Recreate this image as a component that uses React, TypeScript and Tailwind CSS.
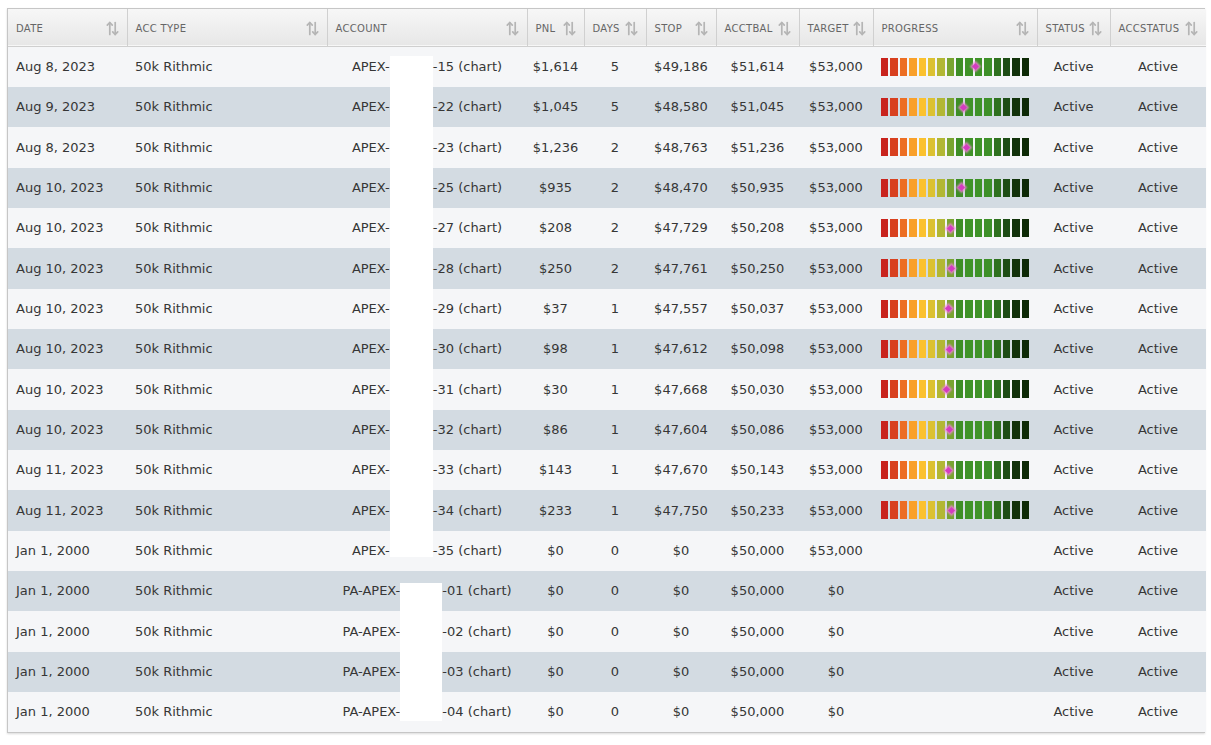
import React from "react";

type Row = {
  date: string;
  pre: string;
  suf: string;
  pnl: string;
  days: string;
  stop: string;
  bal: string;
  target: string;
  progress: number | null;
};

const raw: [string, string, string, string, string, string, string, string, number | null][] = [
  ["Aug 8, 2023", "APEX-", "-15 (chart)", "$1,614", "5", "$49,186", "$51,614", "$53,000", 0.637],
  ["Aug 9, 2023", "APEX-", "-22 (chart)", "$1,045", "5", "$48,580", "$51,045", "$53,000", 0.558],
  ["Aug 8, 2023", "APEX-", "-23 (chart)", "$1,236", "2", "$48,763", "$51,236", "$53,000", 0.579],
  ["Aug 10, 2023", "APEX-", "-25 (chart)", "$935", "2", "$48,470", "$50,935", "$53,000", 0.544],
  ["Aug 10, 2023", "APEX-", "-27 (chart)", "$208", "2", "$47,729", "$50,208", "$53,000", 0.47],
  ["Aug 10, 2023", "APEX-", "-28 (chart)", "$250", "2", "$47,761", "$50,250", "$53,000", 0.475],
  ["Aug 10, 2023", "APEX-", "-29 (chart)", "$37", "1", "$47,557", "$50,037", "$53,000", 0.456],
  ["Aug 10, 2023", "APEX-", "-30 (chart)", "$98", "1", "$47,612", "$50,098", "$53,000", 0.461],
  ["Aug 10, 2023", "APEX-", "-31 (chart)", "$30", "1", "$47,668", "$50,030", "$53,000", 0.443],
  ["Aug 10, 2023", "APEX-", "-32 (chart)", "$86", "1", "$47,604", "$50,086", "$53,000", 0.46],
  ["Aug 11, 2023", "APEX-", "-33 (chart)", "$143", "1", "$47,670", "$50,143", "$53,000", 0.458],
  ["Aug 11, 2023", "APEX-", "-34 (chart)", "$233", "1", "$47,750", "$50,233", "$53,000", 0.473],
  ["Jan 1, 2000", "APEX-", "-35 (chart)", "$0", "0", "$0", "$50,000", "$53,000", null],
  ["Jan 1, 2000", "PA-APEX-", "-01 (chart)", "$0", "0", "$0", "$50,000", "$0", null],
  ["Jan 1, 2000", "PA-APEX-", "-02 (chart)", "$0", "0", "$0", "$50,000", "$0", null],
  ["Jan 1, 2000", "PA-APEX-", "-03 (chart)", "$0", "0", "$0", "$50,000", "$0", null],
  ["Jan 1, 2000", "PA-APEX-", "-04 (chart)", "$0", "0", "$0", "$50,000", "$0", null],
];

const rows: Row[] = raw.map((r) => ({
  date: r[0],
  pre: r[1],
  suf: r[2],
  pnl: r[3],
  days: r[4],
  stop: r[5],
  bal: r[6],
  target: r[7],
  progress: r[8],
}));

// class for the white redaction block per row
const maskClass = (i: number) => {
  if (i === 0) return "self-end h-[31.35px] w-[43px]";
  if (i === 12) return "self-start h-[26px] w-[43px]";
  if (i === 13) return "self-end h-[28px] w-[42px]";
  if (i === 16) return "self-start h-[28.5px] w-[42px]";
  if (i >= 13) return "self-stretch w-[42px]";
  return "self-stretch w-[43px]";
};

const segColors = [
  "bg-[#c8231d]",
  "bg-[#d8401f]",
  "bg-[#ec6e23]",
  "bg-[#f9a02a]",
  "bg-[#fbc12e]",
  "bg-[#dcc131]",
  "bg-[#b2b734]",
  "bg-[#78a430]",
  "bg-[#3e8e26]",
  "bg-[#3f9328]",
  "bg-[#3f9328]",
  "bg-[#3e9029]",
  "bg-[#2f711f]",
  "bg-[#1e4d16]",
  "bg-[#12320b]",
  "bg-[#0d2a06]",
];

function SortIcon() {
  return (
    <svg width="13" height="15" viewBox="0 0 13 15" className="shrink-0">
      <g stroke="#b5b5b5" strokeWidth="1.7" fill="none" strokeLinecap="round" strokeLinejoin="round">
        <path d="M3.8 13.5 V1.5" />
        <path d="M1.3 4.2 L3.8 1.5 L6.3 4.2" />
        <path d="M9.2 1.5 V13.5" />
        <path d="M6.7 10.8 L9.2 13.5 L11.7 10.8" />
      </g>
    </svg>
  );
}

function Progress({ value }: { value: number }) {
  return (
    <div className="relative w-[148px] h-[18px] flex gap-[2px]">
      {segColors.map((c, i) => (
        <div key={i} className={`flex-1 ${c}`} />
      ))}
      <div
        className="absolute top-1/2 w-[5px] h-[5px] bg-[#d43cc0] rotate-45 shadow-[0_0_2px_1.5px_rgba(236,130,214,0.85)]"
        style={{ left: `${value * 148 - 2.5}px`, marginTop: "-2.5px" }}
      />
    </div>
  );
}

const headers: { label: string; w: string }[] = [
  { label: "Date", w: "w-[119px]" },
  { label: "Acc Type", w: "w-[200px]" },
  { label: "Account", w: "w-[200px]" },
  { label: "PNL", w: "w-[57px]" },
  { label: "Days", w: "w-[62px]" },
  { label: "Stop", w: "w-[70px]" },
  { label: "AcctBal", w: "w-[83px]" },
  { label: "Target", w: "w-[74px]" },
  { label: "Progress", w: "w-[164px]" },
  { label: "Status", w: "w-[73px]" },
  { label: "AccStatus", w: "w-[96px]" },
];

export default function App() {
  return (
    <div
      className="bg-white w-[1211px] h-[745px] pt-[8px] pl-[7px]"
      style={{ fontFamily: "'DejaVu Sans', sans-serif" }}
    >
      <div className="w-[1198px] border border-[#c6c6c6] shadow-[0_1px_2px_rgba(0,0,0,0.15)]">
        <table className="w-full border-collapse table-fixed">
          <colgroup>
            {headers.map((h, i) => (
              <col key={i} className={h.w} />
            ))}
          </colgroup>
          <thead>
            <tr className="h-[37px] bg-gradient-to-b from-[#f7f7f7] to-[#e7e7e7] border-b border-[#cfcfcf]">
              {headers.map((h, i) => (
                <th
                  key={i}
                  className="px-2 font-normal text-left border-r border-[#d0d0d0] last:border-r-0"
                >
                  <div className="flex items-center justify-between gap-1 pt-[2px]">
                    <span className="uppercase text-[10px] tracking-[0.3px] text-[#666666]">{h.label}</span>
                    <SortIcon />
                  </div>
                </th>
              ))}
            </tr>
          </thead>
          <tbody className="text-[13px] text-[#363636]">
            {rows.map((r, i) => (
              <tr key={i} className={`h-[40.35px] ${i % 2 === 0 ? "bg-[#f5f6f8]" : "bg-[#d3dbe2]"}`}>
                <td className="px-2 whitespace-nowrap">{r.date}</td>
                <td className="px-2 whitespace-nowrap">50k Rithmic</td>
                <td className="p-0">
                  <div className="h-[40.35px] flex justify-center whitespace-nowrap">
                    <span className="self-center">{r.pre}</span>
                    <span className={`bg-white shrink-0 ${maskClass(i)}`} />
                    <span className="self-center">{r.suf}</span>
                  </div>
                </td>
                <td className="text-center whitespace-nowrap">{r.pnl}</td>
                <td className="text-center">{r.days}</td>
                <td className="text-center">{r.stop}</td>
                <td className="text-center">{r.bal}</td>
                <td className="text-center">{r.target}</td>
                <td className="pl-2">{r.progress !== null && <Progress value={r.progress} />}</td>
                <td className="text-center">Active</td>
                <td className="text-center">Active</td>
              </tr>
            ))}
          </tbody>
        </table>
      </div>
    </div>
  );
}
